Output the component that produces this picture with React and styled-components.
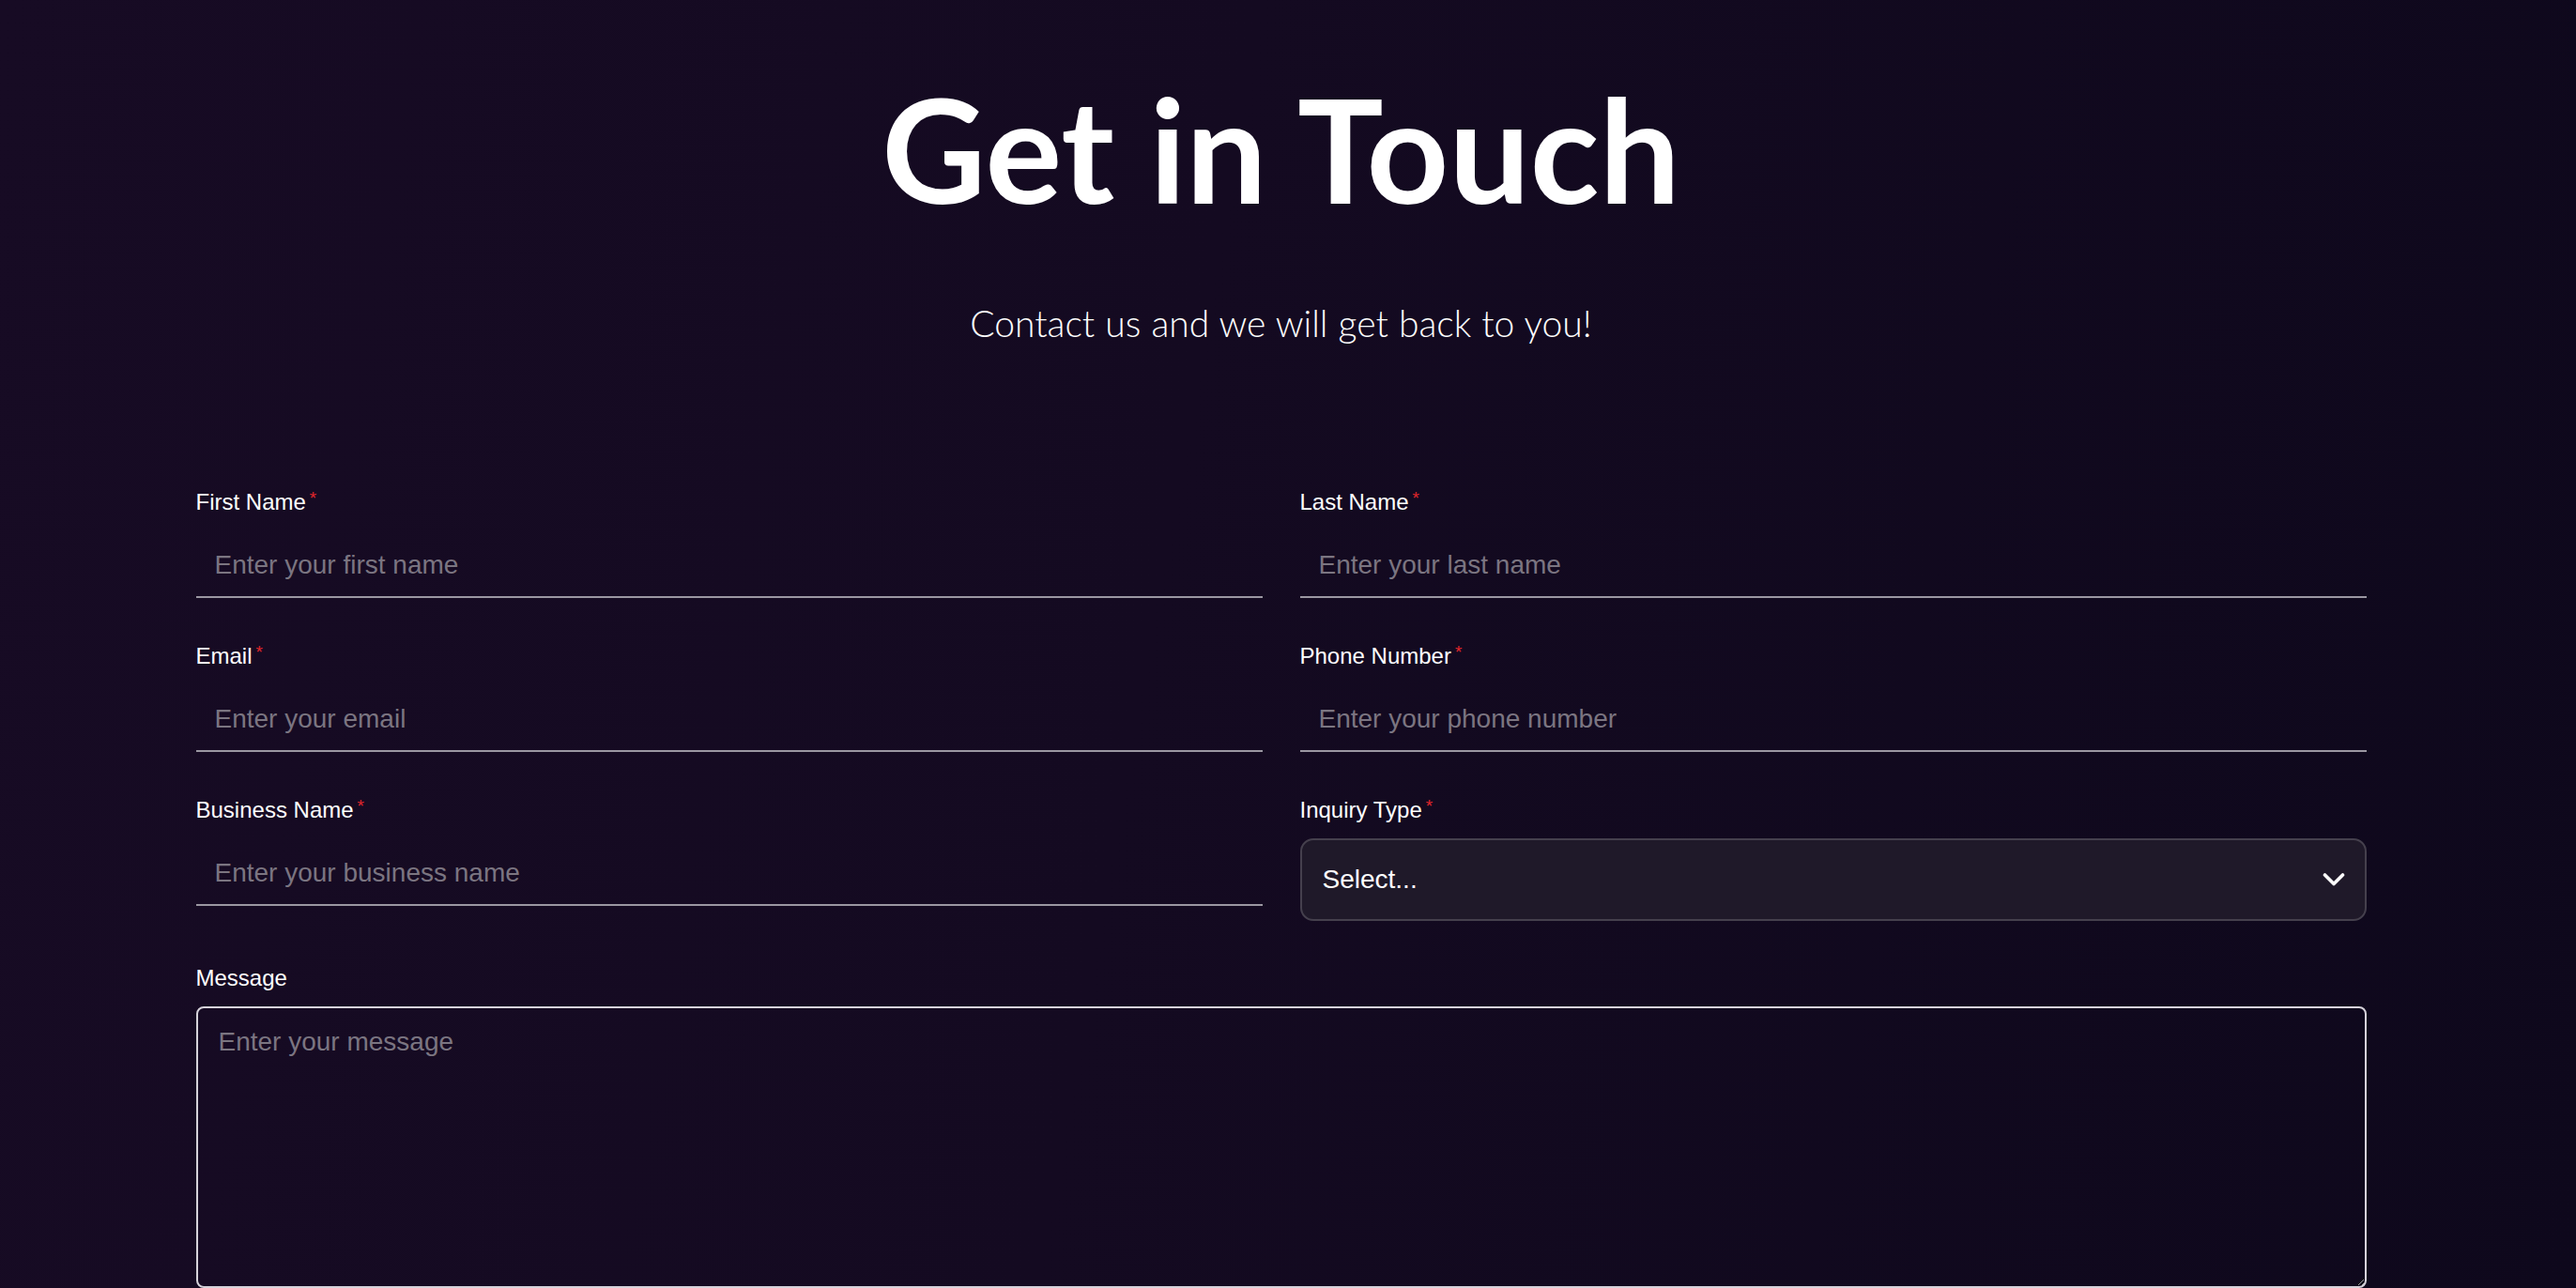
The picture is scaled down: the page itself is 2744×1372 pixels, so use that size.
import React from "react";
import styled, { createGlobalStyle } from "styled-components";

const GlobalStyle = createGlobalStyle`
  html, body {
    margin: 0;
    padding: 0;
    background: #130a20;
  }
  * {
    box-sizing: border-box;
  }
`;

const Page = styled.div`
  min-height: 1372px;
  padding: 0 15px 0 0;
  background: linear-gradient(100deg, #170b24 0%, #140a21 45%, #0e081c 100%);
  font-family: "Liberation Sans", Arial, sans-serif;
  overflow: hidden;
`;

const Header = styled.header`
  display: flex;
  flex-direction: column;
  align-items: center;
  padding-top: 68px;
`;

const Title = styled.h1`
  margin: 0;
  font-family: Lato, "Noto Sans", sans-serif;
  font-weight: 700;
  font-size: 153px;
  line-height: 180px;
  letter-spacing: 0;
  color: #ffffff;
`;

const Subtitle = styled.p`
  margin: 72px 0 0;
  font-family: Lato, "Noto Sans", sans-serif;
  font-weight: 300;
  font-size: 39px;
  line-height: 48px;
  word-spacing: 0.5px;
  color: #ffffff;
`;

const Form = styled.form`
  width: 2312px;
  margin: 149px auto 0;
  display: grid;
  grid-template-columns: 1fr 1fr;
  column-gap: 40px;
  row-gap: 44px;
`;

const Field = styled.div`
  display: flex;
  flex-direction: column;
  gap: 16px;
  grid-column: ${(p) => (p.$wide ? "1 / -1" : "auto")};
  margin-top: ${(p) => (p.$wide ? "3px" : "0")};
`;

const Label = styled.label`
  font-size: 24px;
  line-height: 28px;
  color: #ffffff;
`;

const Required = styled.span`
  color: #e0262b;
  font-size: 19px;
  margin-left: 4px;
  vertical-align: 6px;
`;

const Input = styled.input`
  width: 100%;
  padding: 21px 20px 17px;
  font-family: "Liberation Sans", Arial, sans-serif;
  font-size: 28px;
  line-height: 32px;
  color: #ffffff;
  background: transparent;
  border: none;
  border-bottom: 2px solid #9b97a2;
  outline: none;

  &::placeholder {
    color: #7b7581;
  }
`;

const SelectBox = styled.div`
  display: flex;
  align-items: center;
  justify-content: space-between;
  height: 88px;
  padding: 0 21px 0 22px;
  background: #1f1929;
  border: 2px solid #45404d;
  border-radius: 14px;
  font-size: 28px;
  color: #ffffff;
`;

const TextArea = styled.textarea`
  width: 100%;
  height: 300px;
  padding: 20px 22px;
  font-family: "Liberation Sans", Arial, sans-serif;
  font-size: 28px;
  line-height: 32px;
  color: #ffffff;
  background: transparent;
  border: 2px solid #d6d2da;
  border-radius: 8px;
  outline: none;
  resize: vertical;
  display: block;

  &::placeholder {
    color: #7b7581;
  }
`;

const Chevron = () => (
  <svg width="24" height="16" viewBox="0 0 24 16" fill="none">
    <path
      d="M2.5 3 L12 12.5 L21.5 3"
      stroke="#ffffff"
      strokeWidth="3.6"
      strokeLinecap="round"
      strokeLinejoin="round"
    />
  </svg>
);

const fields = [
  { label: "First Name", placeholder: "Enter your first name" },
  { label: "Last Name", placeholder: "Enter your last name" },
  { label: "Email", placeholder: "Enter your email" },
  { label: "Phone Number", placeholder: "Enter your phone number" },
  { label: "Business Name", placeholder: "Enter your business name" },
];

export default function App() {
  return (
    <>
      <GlobalStyle />
      <Page>
        <Header>
          <Title>Get in Touch</Title>
          <Subtitle>Contact us and we will get back to you!</Subtitle>
        </Header>
        <Form onSubmit={(e) => e.preventDefault()}>
          {fields.map((f) => (
            <Field key={f.label}>
              <Label>
                {f.label}
                <Required>*</Required>
              </Label>
              <Input placeholder={f.placeholder} />
            </Field>
          ))}
          <Field>
            <Label>
              Inquiry Type
              <Required>*</Required>
            </Label>
            <SelectBox>
              <span>Select...</span>
              <Chevron />
            </SelectBox>
          </Field>
          <Field $wide>
            <Label>Message</Label>
            <TextArea placeholder="Enter your message" />
          </Field>
        </Form>
      </Page>
    </>
  );
}
